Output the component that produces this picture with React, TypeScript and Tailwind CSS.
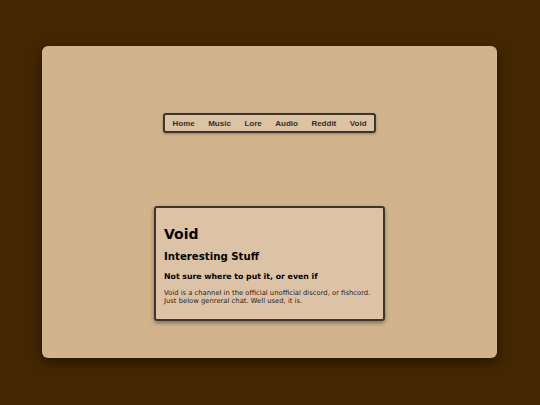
export default function App() {
  const links = ['Home', 'Music', 'Lore', 'Audio', 'Reddit', 'Void'];
  return (
    <div className="w-[540px] h-[405px] bg-[#432702] pt-[46px] pl-[42px]">
      <div className="w-[455px] h-[312px] bg-[#d2b48c] rounded-[6px] shadow-[0_4px_12px_rgba(0,0,0,0.5)] flex flex-col items-center pt-[67px]">
        {/* Nav */}
        <nav className="h-[20px] px-[7px] pt-[1px] flex items-center gap-[13.5px] border-2 border-[#3a3630] rounded-[3px] bg-[#dcc3a4] shadow-[0_1px_3px_rgba(0,0,0,0.3)]">
          {links.map((l) => (
            <a
              key={l}
              className="text-[8px] font-bold text-[#33302a] font-['Liberation_Sans',Arial,sans-serif] leading-none"
            >
              {l}
            </a>
          ))}
        </nav>

        {/* Card */}
        <div className="mt-[73px] w-[231px] h-[115px] border-2 border-[#3a3630] rounded-[3px] bg-[#dcc3a5] shadow-[0_2px_4px_rgba(0,0,0,0.4)] px-[8px] pt-[19px] font-['DejaVu_Sans',Verdana,sans-serif] text-black">
          <h1 className="text-[14px] font-bold leading-none">Void</h1>
          <h2 className="mt-[11px] text-[10.2px] font-bold leading-none">Interesting Stuff</h2>
          <h3 className="mt-[11px] text-[7.8px] font-bold leading-none">Not sure where to put it, or even if</h3>
          <p className="mt-[8px] text-[6.8px] leading-[8px] text-[#2a2620]">
            Void is a channel in the official unofficial discord, or fishcord.
            <br />
            Just below genreral chat. Well used, it is.
          </p>
        </div>
      </div>
    </div>
  );
}
